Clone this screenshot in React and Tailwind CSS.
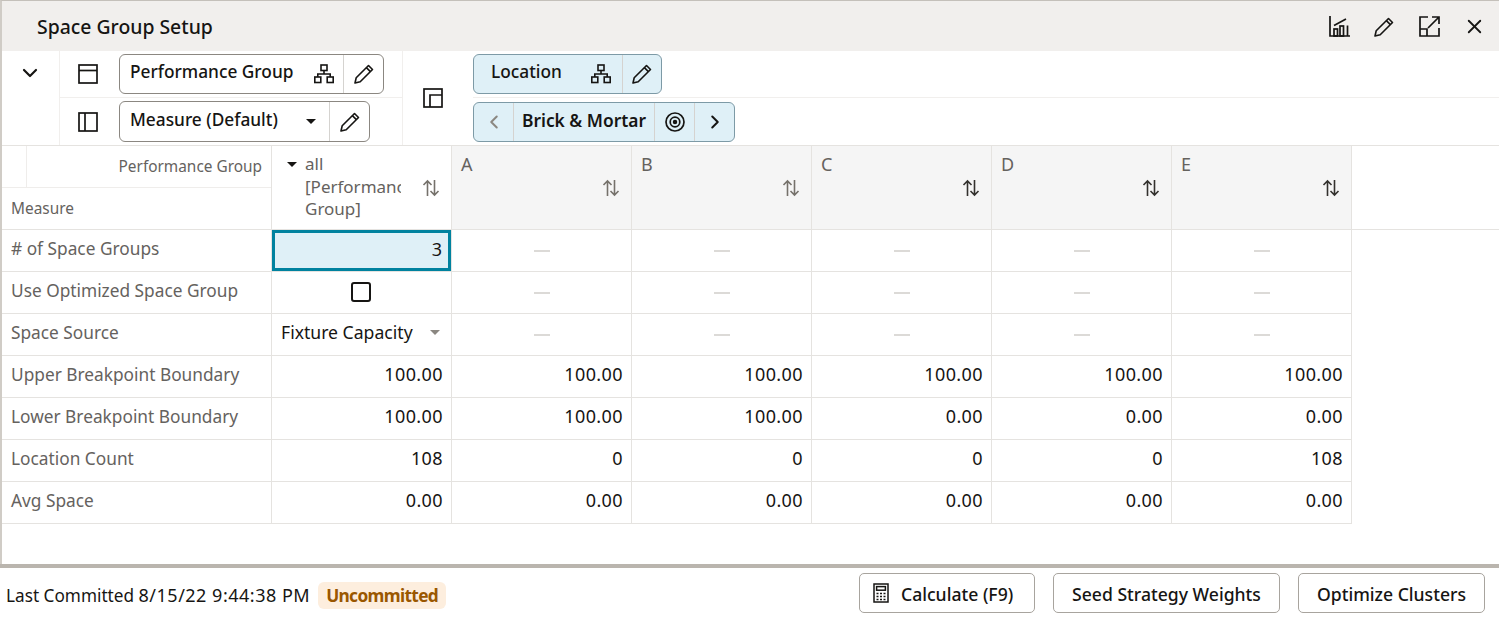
import React from 'react';
import { ChevronDown, ChevronLeft, ChevronRight, X } from 'lucide-react';

const Hierarchy = () => (
  <svg width="20" height="20" viewBox="0 0 20 20" fill="none" stroke="#161513" strokeWidth="1.6">
    <rect x="7" y="1" width="6" height="5.5" />
    <rect x="0.8" y="13" width="6" height="5.5" />
    <rect x="13.2" y="13" width="6" height="5.5" />
    <path d="M10 6.5V10M3.800 13V10H16.200V13" />
  </svg>
);

const Edit = ({ size = 22 }) => (
  <svg width={size} height={size} viewBox="0 0 22 22" fill="none" stroke="#161513" strokeWidth="1.6" strokeLinejoin="round">
    <path d="M2 20l1.200-5.200L15.500 2.500l4 4L7.200 18.800 2 20z" />
    <path d="M13.400 4.600l4 4" />
  </svg>
);

const SortIcon = ({ dark }) => (
  <svg width="18" height="18" viewBox="0 0 18 18" fill="none" stroke={dark ? '#33312e' : '#75716b'} strokeWidth="1.6">
    <path d="M5.500 17V2M1.500 6l4-4 4 4" />
    <path d="M12.500 1v15M8.500 12l4 4 4-4" />
  </svg>
);

const Caret = ({ color = '#161513' }) => (
  <span className="inline-block w-0 h-0 border-l-[5px] border-r-[5px] border-t-[5px] border-l-transparent border-r-transparent" style={{ borderTopColor: color }} />
);

const Dash = () => <span className="block w-4 h-[2px] bg-[#dcdad7]" />;

const colHeads = [
  { label: 'A' },
  { label: 'B' },
  { label: 'C', dark: true },
  { label: 'D', dark: true },
  { label: 'E', dark: true },
];

const rows = [
  { name: '# of Space Groups', first: 'selected', cells: null },
  { name: 'Use Optimized Space Group', first: 'check', cells: null },
  { name: 'Space Source', first: 'select', cells: null },
  { name: 'Upper Breakpoint Boundary', first: '100.00', cells: ['100.00', '100.00', '100.00', '100.00', '100.00'] },
  { name: 'Lower Breakpoint Boundary', first: '100.00', cells: ['100.00', '100.00', '0.00', '0.00', '0.00'] },
  { name: 'Location Count', first: '108', cells: ['0', '0', '0', '0', '108'] },
  { name: 'Avg Space', first: '0.00', cells: ['0.00', '0.00', '0.00', '0.00', '0.00'] },
];

function FirstCell({ kind }) {
  if (kind === 'selected') {
    return (
      <div className="w-[180px] h-[42px] border-r border-b border-[#e5e3e0] flex">
        <div className="w-full h-[41px] bg-[#dff0f7] border-[3px] border-[#00829f] flex items-center justify-end pr-[6px] pb-[3px] text-[18px] text-[#161513]">3</div>
      </div>
    );
  }
  if (kind === 'check') {
    return (
      <div className="w-[180px] h-[42px] border-r border-b border-[#e5e3e0] flex items-center justify-center pr-[1px] pb-[2px]">
        <span className="block w-[20px] h-[20px] border-2 border-[#161513] rounded-[3px]" />
      </div>
    );
  }
  if (kind === 'select') {
    return (
      <div className="w-[180px] h-[42px] border-r border-b border-[#e5e3e0] flex items-center justify-between pl-[9px] pr-[11px] pb-[4px] text-[17.6px] text-[#161513]">
        <span>Fixture Capacity</span>
        <Caret color="#8b8781" />
      </div>
    );
  }
  return (
    <div className="w-[180px] h-[42px] border-r border-b border-[#e5e3e0] flex items-center justify-end pr-[8px] pb-[4px] text-[18px] tracking-[0.4px] text-[#161513]">{kind}</div>
  );
}

export default function App() {
  return (
    <div className="w-[1499px] h-[620px] bg-white overflow-hidden flex flex-col text-[#161513] font-['Noto_Sans',sans-serif] text-[17.3px]">
      <div className="h-[564px] border-t border-l-2 border-t-[#c4c0ba] border-l-[#d0ccc6] flex flex-col">
        {/* title bar */}
        <div className="h-[50px] bg-[#f1efed] flex items-center justify-between pl-[35px] pr-[13px]">
          <h1 className="text-[19.4px] font-medium leading-none pt-[1px]">Space Group Setup</h1>
          <div className="flex items-center gap-[23.500px] pt-[1px]">
            <svg width="21" height="21" viewBox="0 0 21 21" fill="none" stroke="#161513" strokeWidth="1.7">
              <path d="M1 0v20h20" />
              <path d="M5 9.500L17 3" />
              <rect x="5" y="13" width="3.500" height="7" />
              <rect x="11" y="10" width="3.500" height="10" />
              <path d="M18.500 9.500V20" />
            </svg>
            <Edit />
            <svg width="21" height="21" viewBox="0 0 21 21" fill="none" stroke="#161513" strokeWidth="1.7">
              <path d="M9 1H1v19h19v-8" />
              <path d="M1 13h7v7" />
              <path d="M9 12L20 1M13 1h7v7" />
            </svg>
            <X size={23} strokeWidth={1.9} color="#161513" />
          </div>
        </div>

        {/* toolbar */}
        <div className="h-[95px] flex border-b border-[#e5e3e0]">
          <div className="w-[58px] border-r border-[#f1efed] flex justify-center pt-[10px] pr-[1px]">
            <ChevronDown size={24} strokeWidth={2.2} />
          </div>
          <div className="w-[343px] border-r border-[#f1efed] flex flex-col">
            <div className="h-[47px] border-b border-[#f1efed] flex items-center">
              <div className="w-[59px] flex justify-center pr-[4px]">
                <svg width="20" height="20" viewBox="0 0 20 20" fill="none" stroke="#161513" strokeWidth="1.7"><rect x="1" y="1" width="18" height="18" /><path d="M1 6.500h18" /></svg>
              </div>
              <div className="w-[265px] h-[40px] border border-[#8b8781] rounded-[6px] flex items-center">
                <span className="flex-1 pl-[10px] pb-[4px] font-medium">Performance Group</span>
                <span className="pr-[9px]"><Hierarchy /></span>
                <span className="w-[40px] h-full border-l border-[#d5d3d0] flex items-center justify-center"><Edit /></span>
              </div>
            </div>
            <div className="h-[47px] flex items-center">
              <div className="w-[59px] flex justify-center pr-[4px]">
                <svg width="20" height="20" viewBox="0 0 20 20" fill="none" stroke="#161513" strokeWidth="1.7"><rect x="1" y="1" width="18" height="18" /><path d="M7 1v18" /></svg>
              </div>
              <div className="w-[251px] h-[41px] border border-[#8b8781] rounded-[6px] flex items-center">
                <span className="flex-1 pl-[10px] pb-[4px] font-medium">Measure (Default)</span>
                <span className="pr-[13px] flex"><Caret /></span>
                <span className="w-[40px] h-full border-l border-[#d5d3d0] flex items-center justify-center"><Edit /></span>
              </div>
            </div>
          </div>
          <div className="w-[59px] flex items-center justify-center">
            <svg width="20" height="20" viewBox="0 0 20 20" fill="none" stroke="#161513" strokeWidth="1.7"><rect x="1" y="1" width="18" height="18" /><path d="M7 19V7h12" /></svg>
          </div>
          <div className="flex-1 flex flex-col pl-[11px]">
            <div className="h-[47px] border-b border-[#f1efed] flex items-center">
              <div className="w-[189px] h-[40px] bg-[#dff0f7] border border-[#7d9aa6] rounded-[6px] flex items-center">
                <span className="flex-1 pl-[17px] pb-[4px] font-medium">Location</span>
                <span className="pr-[11px]"><Hierarchy /></span>
                <span className="w-[39px] h-full border-l border-[#d5d3d0] flex items-center justify-center"><Edit /></span>
              </div>
            </div>
            <div className="h-[47px] flex items-center">
              <div className="w-[262px] h-[40px] mt-[1px] bg-[#dff0f7] border border-[#7d9aa6] rounded-[6px] flex items-center">
                <span className="w-[40px] h-full border-r border-[#d5d3d0] flex items-center justify-center"><ChevronLeft size={22} strokeWidth={2.2} color="#8b8781" /></span>
                <span className="w-[140px] text-center pb-[3px] font-semibold text-[17.4px]">Brick &amp; Mortar</span>
                <span className="w-[41px] h-full border-x border-[#d5d3d0] flex items-center justify-center">
                  <svg width="20" height="20" viewBox="0 0 20 20" fill="none" stroke="#161513" strokeWidth="1.7"><circle cx="10" cy="10" r="9" /><circle cx="10" cy="10" r="4.800" /><circle cx="10" cy="10" r="1.400" fill="#161513" /></svg>
                </span>
                <span className="flex-1 flex items-center justify-center"><ChevronRight size={22} strokeWidth={2.2} /></span>
              </div>
            </div>
          </div>
        </div>

        {/* grid */}
        <div className="flex-1 text-[#65625e]">
          <div className="flex h-[84px] border-b border-[#e5e3e0]">
            <div className="w-[270px] border-r border-[#e5e3e0] flex flex-col text-[15.4px]">
              <div className="h-[42px] border-b border-[#efedeb] flex">
                <div className="w-[25px] border-r border-[#efedeb]" />
                <div className="flex-1 flex items-center justify-end pr-[9px] pt-[1px]">Performance Group</div>
              </div>
              <div className="flex-1 flex items-center pl-[9px] pt-[1px]">Measure</div>
            </div>
            <div className="w-[180px] border-r border-[#e5e3e0] flex relative pl-[33px] pt-[7px] leading-[22.5px] text-[17px]">
              <span className="absolute left-[15px] top-[16px] flex"><Caret /></span>
              <div className="w-[96px] overflow-hidden whitespace-nowrap">all<br />[Performance<br />Group]</div>
              <span className="absolute right-[11px] top-[33px]"><SortIcon /></span>
            </div>
            {colHeads.map((c) => (
              <div key={c.label} className="w-[180px] border-r border-[#e5e3e0] bg-[#f5f5f5] relative pl-[9px] pt-[7px] leading-[22.5px] text-[18px]">
                {c.label}
                <span className="absolute right-[11px] top-[33px]"><SortIcon dark={c.dark} /></span>
              </div>
            ))}
          </div>
          {rows.map((r) => (
            <div key={r.name} className="flex">
              <div className="w-[270px] h-[42px] border-r border-b border-[#e5e3e0] flex items-center pl-[9px] pb-[3px]">{r.name}</div>
              <FirstCell kind={r.first} />
              {(r.cells || ['', '', '', '', '']).map((v, i) => (
                <div key={i} className={`w-[180px] h-[42px] border-r border-b border-[#e5e3e0] flex items-center ${r.cells ? 'justify-end pr-[8px] pb-[4px] text-[18px] tracking-[0.4px] text-[#161513]' : 'justify-center'}`}>
                  {r.cells ? v : <Dash />}
                </div>
              ))}
            </div>
          ))}
        </div>
      </div>

      {/* footer */}
      <div className="h-[4px] bg-[#bab5ae]" />
      <div className="flex-1 flex items-center justify-between pl-[6px] pr-[14px] pb-[2px]">
        <div className="flex items-center pt-[4px]">
          <span className="text-[17.2px]">Last Committed <span className="text-[18px] tracking-[0.5px]">8/15/22 9:44:38 PM</span></span>
          <span className="ml-[8px] h-[27px] w-[128px] pt-[1px] rounded-[6px] bg-[#fdeede] text-[#9a5700] text-[17.3px] tracking-[-0.65px] font-bold flex items-center justify-center">Uncommitted</span>
        </div>
        <div className="flex items-center gap-[18px] font-medium text-[17.6px]">
          <button className="w-[176px] h-[40px] pt-[3px] border border-[#a8a49e] rounded-[5px] flex items-center pl-[13px] gap-[12px]">
            <svg width="16" height="20" viewBox="0 0 16 20" fill="none" stroke="#161513" strokeWidth="1.5" className="-mt-[3px]">
              <rect x="1" y="1" width="14" height="18" />
              <rect x="3.600" y="3.600" width="8.800" height="3.600" />
              <path d="M3.500 10.500h2M7 10.500h2M10.500 10.500h2M3.500 13.500h2M7 13.500h2M10.500 13.500h2M3.500 16.500h2M7 16.500h2M10.500 16.500h2" />
            </svg>
            Calculate (F9)
          </button>
          <button className="w-[227px] h-[40px] pt-[3px] border border-[#a8a49e] rounded-[5px]">Seed Strategy Weights</button>
          <button className="w-[187px] h-[40px] pt-[3px] border border-[#a8a49e] rounded-[5px]">Optimize Clusters</button>
        </div>
      </div>
    </div>
  );
}
